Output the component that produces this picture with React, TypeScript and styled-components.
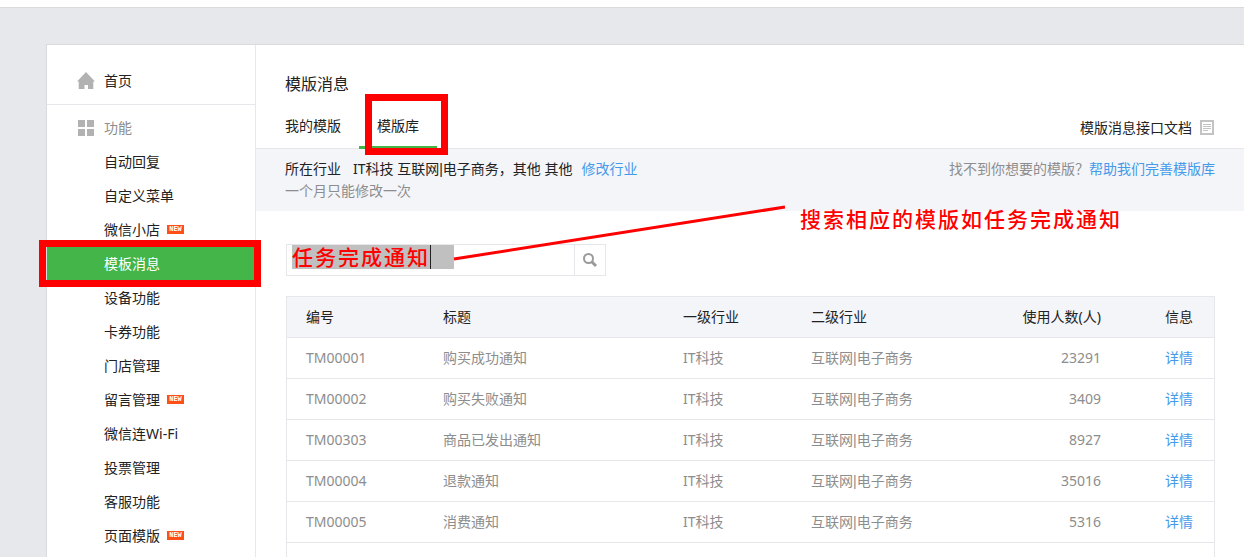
import React from "react";
import styled, { createGlobalStyle, css } from "styled-components";

const GlobalStyle = createGlobalStyle`
  *, *::before, *::after { box-sizing: border-box; }
  body {
    margin: 0;
    background: #e7e8eb;
    color: #222;
    font: 14px/22px "Noto Sans", "Noto Sans CJK SC", sans-serif;
  }
  a { color: inherit; text-decoration: none; }
`;

const Page = styled.div`
  height: 100vh;
  overflow: auto;
  scrollbar-width: none;
`;

const TopBar = styled.header`
  height: 8px;
  background: #fff;
  border-bottom: 1px solid #d9dadc;
`;

const Panel = styled.div`
  display: flex;
  margin: 36px 0 0 46px;
  min-height: 100vh;
  background: #fff;
  border: 1px solid #d9dadc;
  border-right: 0;
`;

const Sidebar = styled.nav`
  flex: 0 0 209px;
  border-right: 1px solid #e7e7eb;
`;

const HomeGroup = styled.div`
  padding: 19px 0 6px;
  border-bottom: 1px solid #e7e7eb;
`;

const FeatureGroup = styled.div`
  padding-top: 6px;
`;

const GroupTitle = styled.div<{ $muted?: boolean }>`
  display: flex;
  align-items: center;
  gap: 9px;
  height: 34px;
  padding-left: 30px;
  color: ${(p) => (p.$muted ? "#8d8d8d" : "#222")};
`;

const MenuList = styled.ul`
  list-style: none;
  margin: 0;
  padding: 0;
`;

const highlightFrame = css`
  content: "";
  position: absolute;
  border: 7px solid #f00;
  pointer-events: none;
  z-index: 2;
`;

const MenuItem = styled.li<{ $active?: boolean }>`
  position: relative;
  ${(p) =>
    p.$active &&
    css`
      background: #44b549;
      color: #fff;
      &::after {
        ${highlightFrame}
        inset: -7px -6px -6px -8px;
      }
    `}
`;

const MenuLink = styled.a`
  display: flex;
  align-items: center;
  gap: 7px;
  height: 34px;
  padding-left: 57px;
`;

const NewBadge = styled.span`
  width: 17px;
  height: 9px;
  margin-bottom: 2px;
  background: #ff4f17;
  color: #fff;
  font: bold 7px/9px "Liberation Mono", monospace;
  text-align: center;
`;

const Main = styled.main`
  flex: 1;
  min-width: 0;
`;

const MainHeader = styled.div`
  padding: 27px 30px 0 29px;
  border-bottom: 1px solid #e7e7eb;
`;

const Title = styled.h2`
  margin: 0 0 8px;
  font-size: 16px;
  line-height: 24px;
  font-weight: 400;
`;

const TabRow = styled.div`
  display: flex;
  justify-content: space-between;
  align-items: center;
  margin-bottom: -1px;
`;

const Tabs = styled.div`
  display: flex;
  margin-left: -18px;
`;

const Tab = styled.a<{ $active?: boolean }>`
  position: relative;
  height: 45px;
  padding: 0 18px;
  line-height: 44px;
  border-bottom: 3px solid ${(p) => (p.$active ? "#44b549" : "transparent")};
  ${(p) =>
    p.$active &&
    css`
      &::after {
        ${highlightFrame}
        inset: -10px -11px -9px 6px;
      }
    `}
`;

const DocLink = styled.a`
  display: flex;
  align-items: center;
  gap: 8px;
  padding-top: 2px;
`;

const Notice = styled.div`
  display: flex;
  justify-content: space-between;
  padding: 9px 29px;
  background: #f4f5f9;
`;

const NoticeLine = styled.p`
  display: flex;
  margin: 0;
`;

const Label = styled.span`
  margin-right: 12px;
`;

const Muted = styled.p`
  margin: 0;
  color: #8d8d8d;
`;

const BlueLink = styled.a`
  color: #459ae9;
`;

const EditLink = styled(BlueLink)`
  margin-left: 9px;
`;

const Pipe = styled.span`
  font-family: "Liberation Sans", sans-serif;
`;

const Body = styled.div`
  position: relative;
  padding: 33px 29px 30px 30px;
`;

const SearchBox = styled.form`
  position: relative;
  display: flex;
  width: 320px;
  height: 32px;
  border: 1px solid #e7e7eb;
`;

const annotationText = css`
  color: #f00;
  font: 500 21px/24px "Noto Sans CJK SC", sans-serif;
  letter-spacing: 2px;
`;

const SearchInput = styled.input`
  ${annotationText}
  width: 162px;
  height: 24px;
  margin: 0 auto 0 5px;
  padding: 0 0 2px;
  border: 0;
  border-radius: 0;
  outline: 0;
  background: #c0c0c0;
`;

const Caret = styled.span`
  position: absolute;
  left: 143px;
  top: 0;
  width: 1px;
  height: 24px;
  background: #222;
`;

const SearchButton = styled.button`
  display: flex;
  align-items: center;
  justify-content: center;
  width: 31px;
  padding: 0;
  border: 0;
  border-left: 1px solid #e7e7eb;
  background: #fff;
`;

const Pointer = styled.svg`
  position: absolute;
  left: 197px;
  top: -8px;
`;

const Annotation = styled.span`
  ${annotationText}
  position: absolute;
  left: 544px;
  top: -5px;
  white-space: nowrap;
`;

const Table = styled.table`
  width: 100%;
  margin-top: 20px;
  table-layout: fixed;
  border: 1px solid #e7e7eb;
  border-spacing: 0;
`;

const Col = styled.col<{ $w?: number }>`
  width: ${(p) => (p.$w ? `${p.$w}px` : "auto")};
`;

const cell = css<{ $right?: boolean }>`
  height: 41px;
  padding: 0 21px 0 19px;
  line-height: 40px;
  font-weight: 400;
  text-align: ${(p) => (p.$right ? "right" : "left")};
  white-space: nowrap;
  border-bottom: 1px solid #e7e7eb;
`;

const Th = styled.th<{ $right?: boolean }>`
  ${cell}
  background: #f4f5f9;
`;

const Td = styled.td<{ $right?: boolean }>`
  ${cell}
  color: #8d8d8d;
`;

const HomeIcon = () => (
  <svg width="18" height="18" viewBox="0 0 18 18" fill="#b2b2b2" aria-hidden="true">
    <path d="M9 0 18 9.500h-1.700V17H11v-4H7.500v4H1.700V9.500H0z" />
  </svg>
);

const GridIcon = () => (
  <svg width="18" height="18" viewBox="0 0 18 18" fill="#b2b2b2" aria-hidden="true">
    <path d="M1 1h7v7H1zM10 1h7v7h-7zM1 10h7v7H1zM10 10h7v7h-7z" />
  </svg>
);

const DocIcon = () => (
  <svg width="14" height="15" viewBox="0 0 14 15" fill="none" stroke="#c3c3c3" aria-hidden="true">
    <path d="M1 1h12v13H1z" strokeWidth="2" />
    <path d="M3 4.500h8M3 6.500h8M3 8.500h8M3 10.500h5" />
  </svg>
);

const SearchIcon = () => (
  <svg width="16" height="16" viewBox="0 0 16 16" fill="none" stroke="#9a9a9a" aria-hidden="true">
    <circle cx="6.500" cy="6.500" r="4.500" strokeWidth="2" />
    <path d="m10 10 4 4" strokeWidth="3" />
  </svg>
);

const Industry = () => (
  <>
    互联网<Pipe>|</Pipe>电子商务
  </>
);

const menu: { name: string; isNew?: boolean; active?: boolean }[] = [
  { name: "自动回复" },
  { name: "自定义菜单" },
  { name: "微信小店", isNew: true },
  { name: "模板消息", active: true },
  { name: "设备功能" },
  { name: "卡券功能" },
  { name: "门店管理" },
  { name: "留言管理", isNew: true },
  { name: "微信连Wi-Fi" },
  { name: "投票管理" },
  { name: "客服功能" },
  { name: "页面模版", isNew: true },
];

const templates = [
  ["TM00001", "购买成功通知", "23291"],
  ["TM00002", "购买失败通知", "3409"],
  ["TM00303", "商品已发出通知", "8927"],
  ["TM00004", "退款通知", "35016"],
  ["TM00005", "消费通知", "5316"],
];

export default function App() {
  return (
    <Page>
      <GlobalStyle />
      <TopBar />
      <Panel>
        <Sidebar>
          <HomeGroup>
            <GroupTitle as="a" href="#home">
              <HomeIcon />
              首页
            </GroupTitle>
          </HomeGroup>
          <FeatureGroup>
            <GroupTitle $muted>
              <GridIcon />
              功能
            </GroupTitle>
            <MenuList>
              {menu.map((m) => (
                <MenuItem key={m.name} $active={m.active}>
                  <MenuLink href="#menu">
                    {m.name}
                    {m.isNew && <NewBadge>NEW</NewBadge>}
                  </MenuLink>
                </MenuItem>
              ))}
            </MenuList>
          </FeatureGroup>
        </Sidebar>
        <Main>
          <MainHeader>
            <Title>模版消息</Title>
            <TabRow>
              <Tabs>
                <Tab href="#mine">我的模版</Tab>
                <Tab href="#library" $active>
                  模版库
                </Tab>
              </Tabs>
              <DocLink href="#doc">
                模版消息接口文档
                <DocIcon />
              </DocLink>
            </TabRow>
          </MainHeader>
          <Notice>
            <div>
              <NoticeLine>
                <Label>所在行业</Label>
                <span>
                  IT科技 <Industry />，其他 其他
                </span>
                <EditLink href="#edit">修改行业</EditLink>
              </NoticeLine>
              <Muted>一个月只能修改一次</Muted>
            </div>
            <Muted>
              找不到你想要的模版？<BlueLink href="#help">帮助我们完善模版库</BlueLink>
            </Muted>
          </Notice>
          <Body>
            <SearchBox>
              <SearchInput aria-label="搜索模版" defaultValue="任务完成通知" />
              <Caret />
              <SearchButton type="button" aria-label="搜索">
                <SearchIcon />
              </SearchButton>
            </SearchBox>
            <Pointer width="334" height="60" aria-hidden="true">
              <path d="M1 56 332 4" stroke="#f00" strokeWidth="3" />
            </Pointer>
            <Annotation>搜索相应的模版如任务完成通知</Annotation>
            <Table>
              <colgroup>
                <Col $w={137} />
                <Col $w={240} />
                <Col $w={128} />
                <Col />
                <Col $w={160} />
                <Col $w={92} />
              </colgroup>
              <thead>
                <tr>
                  <Th>编号</Th>
                  <Th>标题</Th>
                  <Th>一级行业</Th>
                  <Th>二级行业</Th>
                  <Th $right>使用人数(人)</Th>
                  <Th $right>信息</Th>
                </tr>
              </thead>
              <tbody>
                {templates.map(([id, title, users]) => (
                  <tr key={id}>
                    <Td>{id}</Td>
                    <Td>{title}</Td>
                    <Td>IT科技</Td>
                    <Td>
                      <Industry />
                    </Td>
                    <Td $right>{users}</Td>
                    <Td $right>
                      <BlueLink href="#detail">详情</BlueLink>
                    </Td>
                  </tr>
                ))}
                <tr>
                  <Td colSpan={6} />
                </tr>
              </tbody>
            </Table>
          </Body>
        </Main>
      </Panel>
    </Page>
  );
}
